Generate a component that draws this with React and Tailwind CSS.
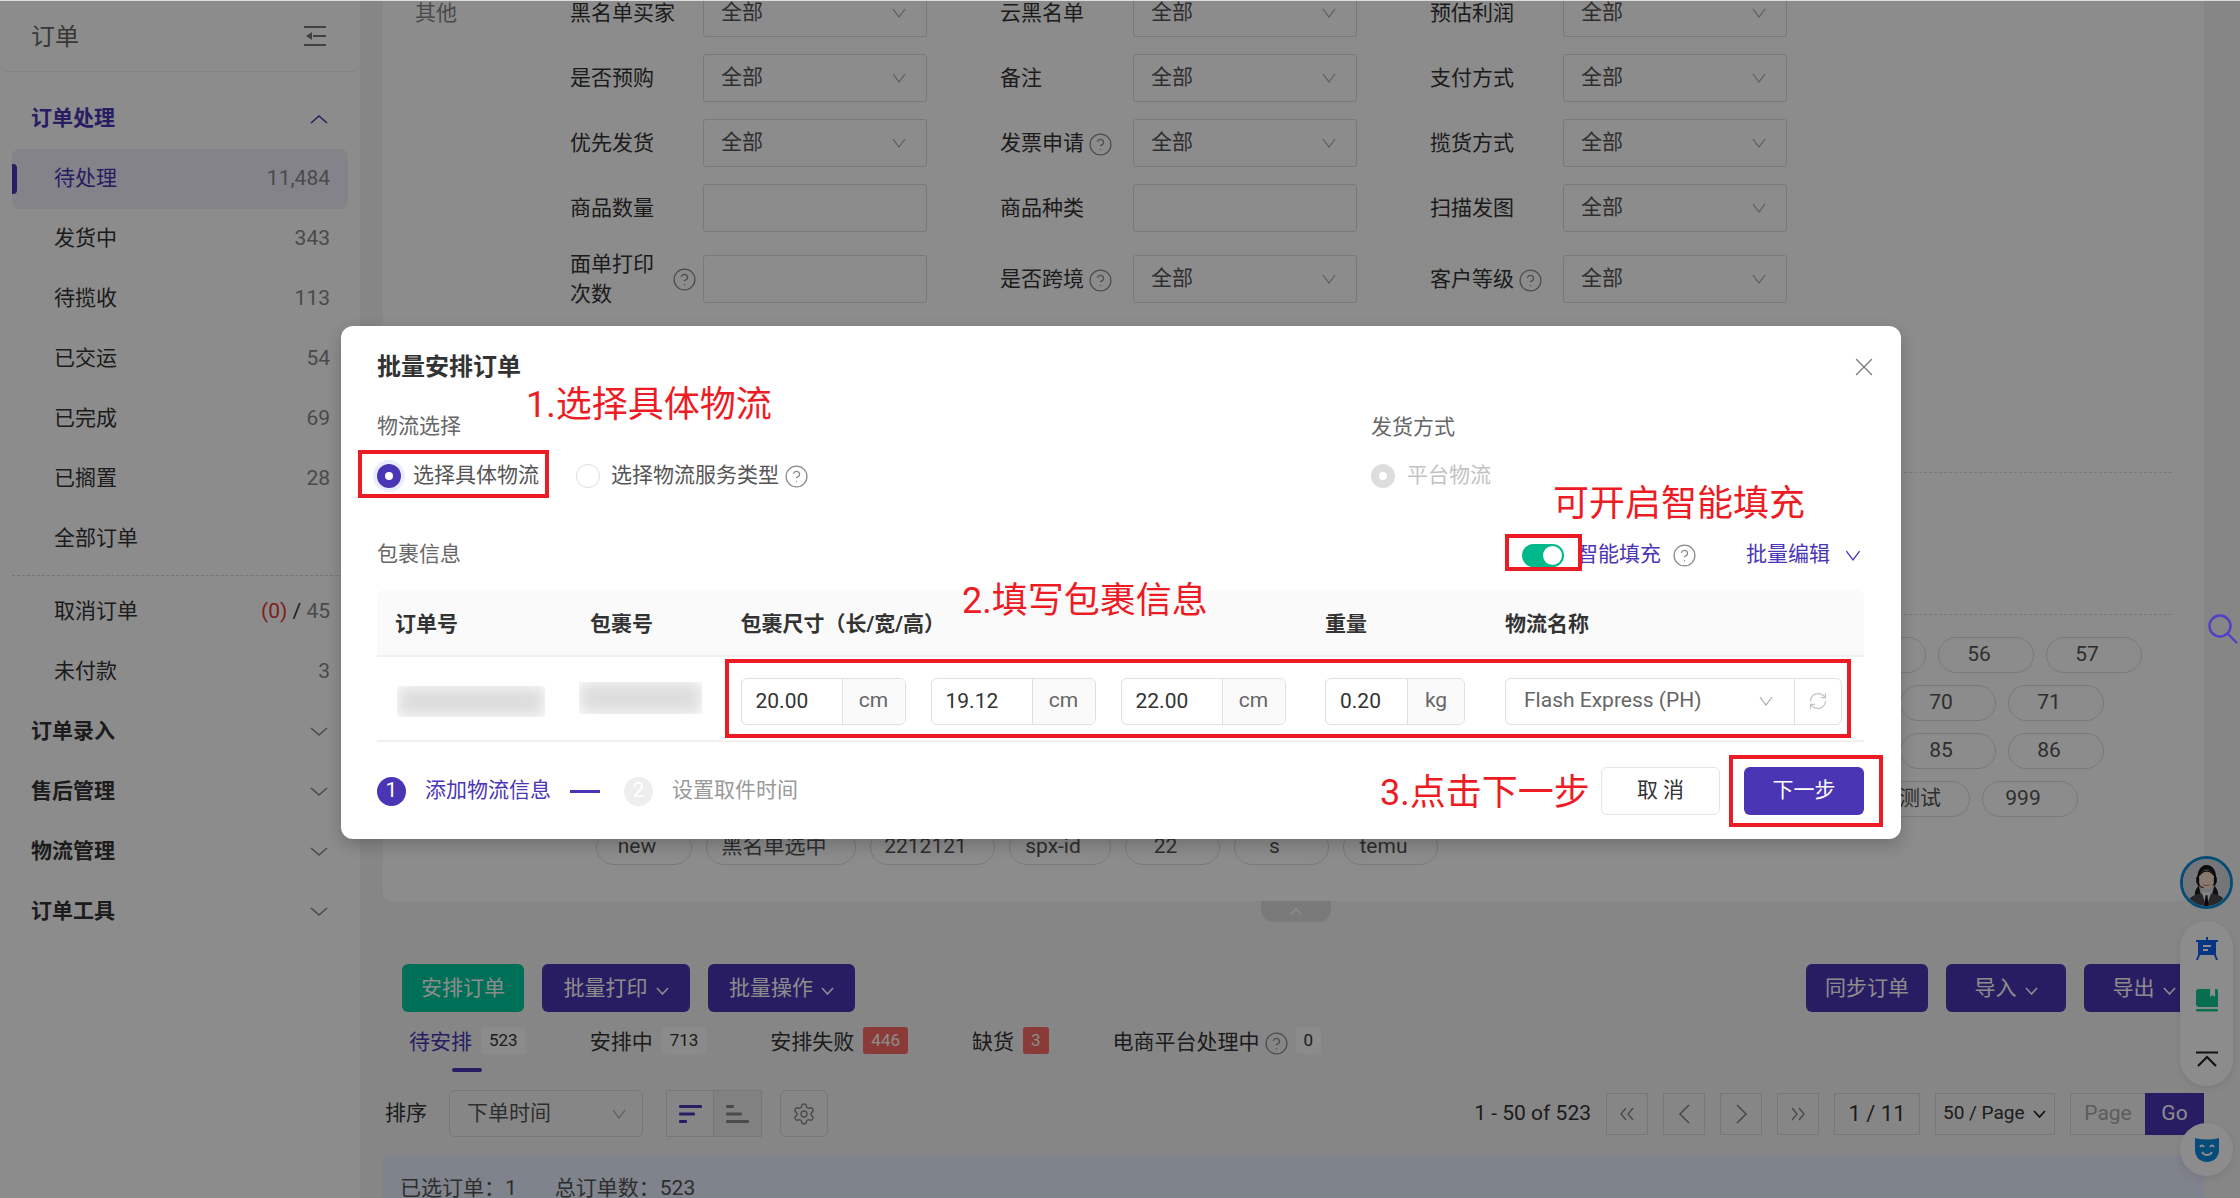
import { CircleHelp, RefreshCw, Settings, X } from 'lucide-react';

const ChevronDown = ({ className = 'w-[14px] h-[10px] text-[#a8a8a8]' }) => (
  <svg viewBox="0 0 14 10" fill="none" stroke="currentColor" strokeWidth="1.2" className={className}>
    <path d="M1 1l6 8 6-8" />
  </svg>
);

const NavChevron = ({ up }) => (
  <svg viewBox="0 0 18 10" fill="none" stroke="currentColor" strokeWidth="1.6" className="w-[18px] h-[10px]">
    <path d={up ? 'M1 9l8-7 8 7' : 'M1 1l8 7 8-7'} />
  </svg>
);

const Help = ({ className = '' }) => (
  <span className={`flex h-[21px] w-[21px] shrink-0 items-center justify-center ${className}`}>
    <CircleHelp size={25} strokeWidth={1.2} className="shrink-0 text-[#8a8a8a]" />
  </span>
);

const FilterSelect = ({ text = '全部' }) => (
  <div className="flex h-[48px] w-[224px] items-center justify-between rounded-[3px] border border-[#dcdcdc] pl-[17px] pr-[20px] text-[#555]">
    <span>{text}</span>
    <ChevronDown />
  </div>
);

const FilterInput = () => <div className="h-[48px] w-[224px] rounded-[3px] border border-[#dcdcdc]" />;

const filterRows = [
  [['黑名单买家'], ['云黑名单'], ['预估利润']],
  [['是否预购'], ['备注'], ['支付方式']],
  [['优先发货'], ['发票申请', 'help'], ['揽货方式']],
  [['商品数量', 'input'], ['商品种类', 'input'], ['扫描发图']],
  [['面单打印次数', 'input-help'], ['是否跨境', 'help'], ['客户等级', 'help']],
];

function FilterField({ label, kind }) {
  if (kind === 'input-help') {
    return (
      <div className="flex items-center">
        <span className="w-[84px] leading-[30px]">面单打印次数</span>
        <Help className="ml-[20px] mr-[8px]" />
        <FilterInput />
      </div>
    );
  }
  return (
    <div className="flex items-center">
      <div className="flex w-[133px] items-center gap-[6px] pt-[2px]">
        <span>{label}</span>
        {kind === 'help' && <Help />}
      </div>
      {kind === 'input' ? <FilterInput /> : <FilterSelect />}
    </div>
  );
}

const Pill = ({ children, className = 'w-[96px] pr-[14px]' }) => (
  <div className={`flex h-[36px] shrink-0 items-center justify-center rounded-full border border-[#dcdcdc] text-[#555] ${className}`}>
    {children}
  </div>
);

const navItems = [
  ['待处理', '11,484', true],
  ['发货中', '343'],
  ['待揽收', '113'],
  ['已交运', '54'],
  ['已完成', '69'],
  ['已搁置', '28'],
  ['全部订单', ''],
];

function Sidebar() {
  return (
    <aside className="h-full w-[360px] shrink-0 bg-white">
      <div className="flex h-[72px] items-center justify-between rounded-b-lg border-b border-[#eeeeee] pl-[31px] pr-[34px] text-[24px] text-[#666]">
        <span className="mt-[2px]">订单</span>
        <svg viewBox="0 0 22 20" className="h-[20px] w-[22px] text-[#777]" fill="currentColor">
          <rect x="0" y="0" width="22" height="2" />
          <rect x="9" y="9" width="13" height="2" />
          <rect x="0" y="18" width="22" height="2" />
          <path d="M2 10l6-4v8z" />
        </svg>
      </div>
      <div className="mt-[17px] flex h-[60px] items-center justify-between pl-[31px] pr-[32px] font-bold text-[#4a35b5]">
        <span>订单处理</span>
        <NavChevron up />
      </div>
      {navItems.map(([name, count, active]) => (
        <div
          key={name}
          className={`relative mx-[12px] flex h-[60px] items-center justify-between rounded-lg pl-[42px] pr-[18px] ${active ? 'bg-[#f1eff9] text-[#4a35b5]' : 'text-[#333]'}`}
        >
          {active && <div className="absolute left-0 top-[15px] h-[30px] w-[5px] rounded-r-sm bg-[#4a35b5]" />}
          <span>{name}</span>
          <span className="text-[#888]">{count}</span>
        </div>
      ))}
      <div className="mx-[12px] mb-[6px] mt-[6px] border-t border-dashed border-[#d5d5d5]" />
      <div className="mx-[12px] flex h-[60px] items-center justify-between pl-[42px] pr-[18px]">
        <span>取消订单</span>
        <span className="text-[#888]">
          <span className="text-[#e53935]">(0)</span> <span className="text-[#333]">/</span> 45
        </span>
      </div>
      <div className="mx-[12px] flex h-[60px] items-center justify-between pl-[42px] pr-[18px]">
        <span>未付款</span>
        <span className="text-[#888]">3</span>
      </div>
      {['订单录入', '售后管理', '物流管理', '订单工具'].map((name) => (
        <div key={name} className="flex h-[60px] items-center justify-between pl-[31px] pr-[32px] font-bold">
          <span>{name}</span>
          <span className="text-[#888]"><NavChevron /></span>
        </div>
      ))}
    </aside>
  );
}

const FilledButton = ({ children, arrow, className = 'bg-[#4a35b5]', width }) => (
  <button className={`flex h-[48px] items-center justify-center gap-[8px] rounded-[6px] pt-[2px] text-white ${className} ${width}`}>
    {children}
    {arrow && (
      <svg viewBox="0 0 13 8" fill="none" stroke="currentColor" strokeWidth="1.6" className="mt-[4px] h-[8px] w-[13px]">
        <path d="M1 1l5.5 6L12 1" />
      </svg>
    )}
  </button>
);

const tabs = [
  ['待安排', '523', 'bg-[#fdfdfd] text-[#333]', true],
  ['安排中', '713', 'bg-[#fdfdfd] text-[#333]'],
  ['安排失败', '446', 'bg-[#fb6a64] text-white'],
  ['缺货', '3', 'bg-[#fb6a64] text-white'],
];

const Badge = ({ children, className }) => (
  <span className={`flex h-[27px] min-w-[25px] items-center justify-center rounded-[3px] px-[8px] text-[17px] ${className}`}>
    {children}
  </span>
);

const PageBtn = ({ children }) => (
  <div className="flex h-[42px] w-[42px] items-center justify-center border border-[#d9d9d9] text-[#888]">{children}</div>
);

const DoubleArrow = ({ d }) => (
  <svg viewBox="0 0 16 14" fill="none" stroke="currentColor" strokeWidth="1.4" className="h-[14px] w-[16px]">
    <path d={d} />
  </svg>
);

const SingleArrow = ({ d }) => (
  <svg viewBox="0 0 13 20" fill="none" stroke="currentColor" strokeWidth="1.6" className="h-[20px] w-[13px]">
    <path d={d} />
  </svg>
);

function Toolbar() {
  return (
    <>
      <div className="mt-[42px] flex shrink-0 items-center pl-[19px]">
        <div className="flex gap-[18px]">
          <FilledButton className="bg-[#00cba0]" width="w-[122px]">安排订单</FilledButton>
          <FilledButton arrow width="w-[148px]">批量打印</FilledButton>
          <FilledButton arrow width="w-[147px]">批量操作</FilledButton>
        </div>
        <div className="ml-auto flex gap-[18px]">
          <FilledButton width="w-[122px]">同步订单</FilledButton>
          <FilledButton arrow width="w-[120px]">导入</FilledButton>
          <FilledButton arrow width="w-[120px]">导出</FilledButton>
        </div>
      </div>
      <div className="mt-[15px] flex h-[45px] shrink-0 gap-[64px] pl-[26px]">
        {tabs.map(([name, num, color, active]) => (
          <div key={name} className={`relative flex h-full items-start gap-[9px] ${active ? 'text-[#4a35b5]' : ''}`}>
            <span className="mt-[1px] leading-[28px]">{name}</span>
            <Badge className={color}>{num}</Badge>
            {active && <div className="absolute bottom-0 left-1/2 h-[4px] w-[30px] -translate-x-1/2 rounded-sm bg-[#4a35b5]" />}
          </div>
        ))}
        <div className="flex h-full items-start gap-[6px]">
          <span className="mt-[1px] leading-[28px]">电商平台处理中</span>
          <Help className="mt-[6px]" />
          <Badge className="ml-[3px] bg-[#fdfdfd] text-[#333]">0</Badge>
        </div>
      </div>
      <div className="mt-[18px] flex h-[47px] shrink-0 items-center pl-[2px]">
        <span className="w-[42px]">排序</span>
        <div className="ml-[22px] flex h-[47px] w-[194px] items-center justify-between rounded-md border border-[#d9d9d9] pl-[17px] pr-[16px] text-[#555]">
          <span>下单时间</span>
          <ChevronDown />
        </div>
        <div className="ml-[23px] flex h-[47px] w-[96px] border border-[#d9d9d9]">
          <div className="flex w-1/2 items-center justify-center border-r border-[#d9d9d9]">
            <svg viewBox="0 0 23 18" className="h-[18px] w-[23px] fill-[#4a35b5]">
              <rect width="23" height="3" rx="1" />
              <rect y="7.5" width="16" height="3" rx="1" />
              <rect y="15" width="8" height="3" rx="1" />
            </svg>
          </div>
          <div className="flex w-1/2 items-center justify-center bg-[#ececec]">
            <svg viewBox="0 0 23 18" className="h-[18px] w-[23px] fill-[#888]">
              <rect width="8" height="3" rx="1" />
              <rect y="7.5" width="16" height="3" rx="1" />
              <rect y="15" width="23" height="3" rx="1" />
            </svg>
          </div>
        </div>
        <div className="ml-[18px] flex h-[47px] w-[48px] items-center justify-center rounded-md border border-[#d9d9d9] text-[#888]">
          <Settings size={24} strokeWidth={1.4} />
        </div>
        <div className="ml-auto flex items-center gap-[15px]">
          <span>1 - 50 of 523</span>
          <PageBtn><DoubleArrow d="M7 1L2 7l5 6M14 1L9 7l5 6" /></PageBtn>
          <PageBtn><SingleArrow d="M11 1L2 10l9 9" /></PageBtn>
          <PageBtn><SingleArrow d="M2 1l9 9-9 9" /></PageBtn>
          <PageBtn><DoubleArrow d="M2 1l5 6-5 6M9 1l5 6-5 6" /></PageBtn>
          <div className="flex h-[42px] w-[86px] items-center justify-center border border-[#d9d9d9] text-[22px]">1 / 11</div>
          <div className="flex h-[42px] w-[120px] items-center justify-between border border-[#d9d9d9] pl-[7px] pr-[8px] text-[19px]">
            <span className="whitespace-nowrap">50 / Page</span>
            <svg viewBox="0 0 13 8" fill="none" stroke="#222" strokeWidth="1.8" className="h-[8px] w-[13px]">
              <path d="M1 1l5.5 6L12 1" />
            </svg>
          </div>
          <div className="flex h-[42px]">
            <div className="flex w-[75px] items-center justify-center border border-r-0 border-[#d9d9d9] text-[#aaa]">Page</div>
            <div className="flex w-[59px] items-center justify-center bg-[#4a35b5] text-white">Go</div>
          </div>
        </div>
      </div>
      <div className="mt-[19px] flex flex-1 gap-[38px] bg-[#e8eeff] pl-[17px] pt-[17px] text-[#555]">
        <span>已选订单：1</span>
        <span>总订单数：523</span>
      </div>
    </>
  );
}

function MainContent() {
  return (
    <main className="ml-[23px] flex h-full w-[1821px] shrink-0 flex-col">
      <div className="h-[901px] shrink-0 overflow-hidden rounded-b-lg bg-white">
        <div className="-mt-[11px] flex pl-[32px]">
          <span className="mt-[9px] w-[155px] text-[#888]">其他</span>
          <div>
            {filterRows.map((row, i) => (
              <div key={i} className={`grid grid-cols-[357px_357px_357px] gap-x-[73px] ${i > 0 ? 'mt-[17px]' : ''}`}>
                {row.map(([label, kind]) => (
                  <FilterField key={label} label={label} kind={kind} />
                ))}
              </div>
            ))}
          </div>
        </div>
        <div className="mx-[32px] mt-[163px] border-t border-dashed border-[#dddddd]" />
        <div className="mx-[32px] mt-[141px] border-t border-dashed border-[#dddddd]" />
        <div className="mt-[22px] flex flex-col gap-[12px]">
          <div className="flex gap-[12px] pl-[1447px]">
            <Pill>55</Pill><Pill>56</Pill><Pill>57</Pill>
          </div>
          <div className="flex gap-[12px] pl-[1517px]">
            <Pill>70</Pill><Pill>71</Pill>
          </div>
          <div className="flex gap-[12px] pl-[1517px]">
            <Pill>85</Pill><Pill>86</Pill>
          </div>
          <div className="flex gap-[12px] pl-[1487px]">
            <Pill className="w-[100px]">测试</Pill><Pill>999</Pill>
          </div>
          <div className="flex gap-[14px] pl-[213px]">
            <Pill className="w-[96px] pr-[14px]">new</Pill>
            <Pill className="w-[150px] pr-[14px]">黑名单选中</Pill>
            <Pill className="w-[125px] pr-[14px]">2212121</Pill>
            <Pill className="w-[102px] pr-[14px]">spx-id</Pill>
            <Pill className="w-[95px] pr-[14px]">22</Pill>
            <Pill className="w-[95px] pr-[14px]">s</Pill>
            <Pill className="w-[95px] pr-[14px]">temu</Pill>
          </div>
        </div>
      </div>
      <div className="mx-auto flex h-[21px] w-[70px] shrink-0 translate-x-[2px] items-center justify-center rounded-b-xl bg-[#dedede] text-white">
        <svg viewBox="0 0 14 8" fill="none" stroke="currentColor" strokeWidth="1.3" className="h-[8px] w-[14px]">
          <path d="M1 7l6-6 6 6" />
        </svg>
      </div>
      <Toolbar />
    </main>
  );
}

function UnitInput({ value, unit, inputWidth, unitWidth }) {
  return (
    <div className="flex h-[47px] w-fit overflow-hidden rounded-md border border-[#e0e0e0]">
      <input readOnly value={value} className={`h-full pl-[14px] text-[#333] outline-none ${inputWidth}`} />
      <div className={`flex items-center justify-center border-l border-[#e0e0e0] bg-[#fafafa] text-[#666] ${unitWidth}`}>{unit}</div>
    </div>
  );
}

const BlurBlock = ({ className }) => (
  <div className={`overflow-hidden ${className}`}>
    <div className="h-full w-full bg-[#dcdcdc] blur-[8px]" />
  </div>
);

function BatchModal() {
  return (
    <div className="absolute left-[341px] top-[326px] w-[1560px] rounded-xl bg-white pb-[24px] pl-[36px] pr-[37px] pt-[25px] shadow-[0_6px_16px_rgba(0,0,0,0.2)]">
      <div className="flex h-[32px] items-center justify-between">
        <h2 className="text-[24px] font-bold leading-none text-[#333]">批量安排订单</h2>
        <X size={30} strokeWidth={1} className="-mr-[15px] text-[#777]" />
      </div>

      <div className="mt-[28px] flex">
        <div className="w-[994px]">
          <div className="mt-[1px] h-[27px] leading-[28px] text-[#666]">物流选择</div>
          <div className="mt-[23px] flex h-[28px] items-center">
            <span className="flex h-[24px] w-[24px] items-center justify-center rounded-full bg-[#4a35b5] shadow-[0_0_0_4px_#e8eeff]">
              <span className="h-[8px] w-[8px] rounded-full bg-white" />
            </span>
            <span className="ml-[12px] text-[#555]">选择具体物流</span>
            <span className="ml-[37px] h-[24px] w-[24px] rounded-full border border-[#dddddd]" />
            <span className="ml-[11px] text-[#555]">选择物流服务类型</span>
            <Help className="ml-[7px]" />
          </div>
        </div>
        <div>
          <div className="mt-[2px] h-[28px] leading-[28px] text-[#666]">发货方式</div>
          <div className="mt-[21px] flex h-[28px] items-center">
            <span className="flex h-[24px] w-[24px] items-center justify-center rounded-full bg-[#dddddd]">
              <span className="h-[8px] w-[8px] rounded-full bg-white" />
            </span>
            <span className="ml-[12px] text-[#c2c2c2]">平台物流</span>
          </div>
        </div>
      </div>

      <div className="mt-[44px] flex h-[40px] items-center pt-[2px]">
        <span className="text-[#666]">包裹信息</span>
        <div className="ml-auto flex items-center text-[#4a35b5]">
          <span className="flex h-[23px] w-[42px] items-center justify-end rounded-full bg-[#00b98b] pr-[2px]">
            <span className="h-[19px] w-[19px] rounded-full bg-white" />
          </span>
          <span className="ml-[13px]">智能填充</span>
          <Help className="ml-[13px]" />
          <span className="ml-[51px]">批量编辑</span>
          <ChevronDown className="ml-[14px] mr-[2px] h-[11px] w-[18px] text-[#4a35b5]" />
        </div>
      </div>

      <div className="mt-[16px]">
        <div className="grid h-[67px] grid-cols-[213px_150.5px_584.5px_180px_1fr] items-center rounded-t-lg border-b-2 border-[#f0f0f0] bg-[#fafafa] pt-[4px] font-bold text-[#333]">
          <span className="pl-[18px]">订单号</span>
          <span>包裹号</span>
          <span>包裹尺寸（长/宽/高）</span>
          <span>重量</span>
          <span>物流名称</span>
        </div>
        <div className="grid h-[85px] grid-cols-[213px_150.5px_584.5px_180px_1fr] items-center border-b-2 border-[#f0f0f0] pt-[5px]">
          <div className="flex items-center pl-[18px] text-[#555]">
            <BlurBlock className="ml-[2px] h-[31px] w-[148px]" />
          </div>
          <BlurBlock className="-ml-[11px] mb-[6px] h-[32px] w-[123px]" />
          <div className="flex gap-[25px]">
            <UnitInput value="20.00" unit="cm" inputWidth="w-[100px]" unitWidth="w-[63px]" />
            <UnitInput value="19.12" unit="cm" inputWidth="w-[100px]" unitWidth="w-[63px]" />
            <UnitInput value="22.00" unit="cm" inputWidth="w-[100px]" unitWidth="w-[63px]" />
          </div>
          <UnitInput value="0.20" unit="kg" inputWidth="w-[81px]" unitWidth="w-[57px]" />
          <div className="flex h-[47px] w-[337px] rounded-md border border-[#e0e0e0]">
            <div className="flex flex-1 items-center justify-between pl-[18px] pr-[21px] text-[#666]">
              <span>Flash Express (PH)</span>
              <ChevronDown />
            </div>
            <div className="flex w-[47px] items-center justify-center border-l border-[#e0e0e0] text-[#c4c4c4]">
              <RefreshCw size={20} strokeWidth={1.5} />
            </div>
          </div>
        </div>
      </div>

      <div className="mt-[25px] flex h-[48px] items-center">
        <span className="flex h-[29px] w-[29px] items-center justify-center rounded-full bg-[#4a35b5] text-white">1</span>
        <span className="ml-[19px] text-[#4a35b5]">添加物流信息</span>
        <span className="ml-[19px] h-[3px] w-[30px] bg-[#4a35b5]" />
        <span className="ml-[24px] flex h-[29px] w-[29px] items-center justify-center rounded-full bg-[#eeeeee] text-white">2</span>
        <span className="ml-[19px] text-[#999]">设置取件时间</span>
        <button className="ml-auto h-[48px] w-[119px] rounded-md border border-[#e5e5e5] text-[#333]">取 消</button>
        <button className="ml-[24px] h-[48px] w-[120px] rounded-md bg-[#4a35b5] text-white">下一步</button>
      </div>
    </div>
  );
}

// tutorial marks drawn on top of the screenshot
function Annotations() {
  return (
    <>
      <div className="absolute left-[358px] top-[450px] h-[48px] w-[191px] border-4 border-[#ed1c24]" />
      <div className="absolute left-[1505px] top-[534px] h-[37px] w-[77px] border-4 border-[#ed1c24]" />
      <div className="absolute left-[725px] top-[659px] h-[79px] w-[1126px] border-4 border-[#ed1c24]" />
      <div className="absolute left-[1729px] top-[755px] h-[72px] w-[154px] border-4 border-[#ed1c24]" />
      <span className="absolute left-[526px] top-[385px] text-[36px] leading-[40px] text-[#ed1c24]">1.选择具体物流</span>
      <span className="absolute left-[1553px] top-[484px] text-[36px] leading-[40px] text-[#ed1c24]">可开启智能填充</span>
      <span className="absolute left-[962px] top-[581px] text-[36px] leading-[40px] text-[#ed1c24]">2.填写包裹信息</span>
      <span className="absolute left-[1380px] top-[773px] text-[36px] leading-[40px] text-[#ed1c24]">3.点击下一步</span>
    </>
  );
}

function FloatTools() {
  return (
    <div className="absolute left-[2180px] top-[856px] flex w-[53px] flex-col">
      <div className="h-[53px] w-[53px] overflow-hidden rounded-full border-[3px] border-[#0a8ad8]">
        <svg viewBox="0 0 48 48" className="h-full w-full">
          <rect width="48" height="48" fill="#d4d8de" />
          <path d="M15 27c-2-13 2-21 9-21s12 7 9 21z" fill="#1c1a1a" />
          <path d="M12 36c0-4 2-6 4-9l2 8-2 6zM36 36c0-4-2-6-4-9l-2 8 2 6z" fill="#1c1a1a" />
          <path d="M4 48c1-9 7-13 20-13s19 4 20 13z" fill="#4a4a4e" />
          <path d="M19 34l5 14 5-14z" fill="#f4f4f4" />
          <path d="M23 37h2l1 11h-4z" fill="#111" />
          <ellipse cx="24" cy="21" rx="8" ry="10.5" fill="#f6dccd" />
          <path d="M16 18c1-8 15-8 16 0-3-4-5-5-8-5s-5 2-8 5z" fill="#1c1a1a" />
          <path d="M20 25c2 2.5 6 2.5 8 0-1 3.5-7 3.5-8 0z" fill="#c05a55" />
          <path d="M15 20a9 9 0 0 1 18 0" fill="none" stroke="#111" strokeWidth="1.2" />
          <rect x="13.5" y="18" width="3" height="7" rx="1.5" fill="#111" />
          <rect x="31.5" y="18" width="3" height="7" rx="1.5" fill="#111" />
          <path d="M15 25c1 3 3 4 6 4" fill="none" stroke="#111" strokeWidth="1" />
        </svg>
      </div>
      <div className="mt-[12px] flex h-[165px] flex-col items-center rounded-full bg-white pt-[16px] shadow-[0_2px_8px_rgba(0,0,0,0.1)]">
        <svg viewBox="0 0 24 24" className="h-[24px] w-[24px] fill-[#0a62f0]">
          <path d="M11 0h2v3h10v2h-2v13l2 5h-2l-2-5H5l-2 5H1l2-5V5H1V3h10z" />
          <rect x="8" y="8" width="8" height="2" fill="#fff" />
          <rect x="8" y="12" width="5" height="2" fill="#fff" />
        </svg>
        <svg viewBox="0 0 22 24" className="mt-[28px] h-[24px] w-[22px]">
          <path d="M3 0h17a2 2 0 0 1 2 2v16H3a3 3 0 0 1-3-3V3a3 3 0 0 1 3-3z" fill="#10c890" />
          <path d="M14 0h5v8l-2.5-2L14 8z" fill="#fff" />
          <rect y="20" width="22" height="2.5" rx="1" fill="#10c890" />
        </svg>
        <svg viewBox="0 0 22 16" fill="none" stroke="#222" strokeWidth="2.2" className="mt-[38px] h-[16px] w-[22px]">
          <path d="M0 1.5h22M2 15l9-9 9 9" />
        </svg>
      </div>
      <div className="mt-[37px] flex h-[53px] items-center justify-center rounded-full bg-white shadow-[0_2px_8px_rgba(0,0,0,0.1)]">
        <svg viewBox="0 0 24 24" className="h-[24px] w-[24px]">
          <path d="M0 0c8 2 16 2 24 0v12c0 7-5 12-12 12S0 19 0 12z" fill="#0a8ae0" />
          <path d="M5 9c1-2 3-2 4 0M15 9c1-2 3-2 4 0M7 14c2 4 8 4 10 0" fill="none" stroke="#fff" strokeWidth="1.8" />
        </svg>
      </div>
    </div>
  );
}

function App() {
  return (
    <div className="relative flex h-[1198px] w-[2240px] overflow-hidden bg-[#f5f5f5] font-[family-name:Roboto,'Noto_Sans_CJK_SC',sans-serif] text-[21px] text-[#333]">
      <Sidebar />
      <MainContent />
      <FloatTools />
      <div className="absolute inset-0 bg-black/45" />
      <div className="absolute inset-x-0 top-0 h-px bg-[#dddddd]" />
      <svg viewBox="0 0 30 30" fill="none" stroke="#5040c8" strokeWidth="2.4" className="absolute left-[2208px] top-[614px] h-[30px] w-[30px]">
        <circle cx="12" cy="12" r="10.5" />
        <path d="M20 20l9 9" />
      </svg>
      <BatchModal />
      <Annotations />
    </div>
  );
}

export default App;
